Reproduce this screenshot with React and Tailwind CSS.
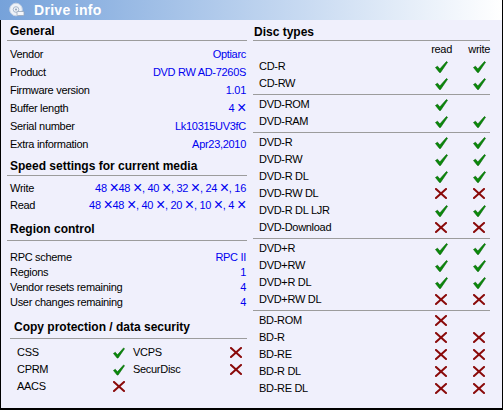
import React from 'react';

const font = { fontFamily: '"Liberation Sans", Arial, sans-serif' };

function X() {
  return <span className="text-[16px] leading-[0] relative top-[1px]">×</span>;
}

function Check() {
  return (
    <svg width="13" height="12" viewBox="0 0 13 12" className="block">
      <path d="M0.5 6.5 L2.5 5.2 L4.8 8 L11.5 0.5 L12.5 1.3 L5.5 11.5 L4.5 11.5 Z" fill="#0a8a0a" stroke="#006000" strokeWidth="0.6" strokeLinejoin="round" />
    </svg>
  );
}

function Cross() {
  return (
    <svg width="12" height="11" viewBox="0 0 12 11" className="block">
      <path d="M1 1 L11 10 M11 1 L1 10" stroke="#8a0a0a" strokeWidth="2" strokeLinecap="square" />
    </svg>
  );
}

function Heading({ children, className = '' }) {
  return (
    <div className={`h-[20px] flex items-center pl-[3px] text-[12px] font-bold tracking-normal text-black ${className}`}>{children}</div>
  );
}

function Line() {
  return <div className="h-px bg-[#9c9c9c]" />;
}

function Row({ label, value, h = 'h-[18px]' }) {
  return (
    <div className={`${h} flex items-center justify-between pl-[3px] pr-[1px]`}>
      <span>{label}</span>
      <span className="text-[#0000f0] whitespace-nowrap">{value}</span>
    </div>
  );
}

const groups = [
  [['CD-R', 1, 1], ['CD-RW', 1, 1]],
  [['DVD-ROM', 1, null], ['DVD-RAM', 1, 1]],
  [['DVD-R', 1, 1], ['DVD-RW', 1, 1], ['DVD-R DL', 1, 1], ['DVD-RW DL', 0, 0], ['DVD-R DL LJR', 1, 1], ['DVD-Download', 0, 0]],
  [['DVD+R', 1, 1], ['DVD+RW', 1, 1], ['DVD+R DL', 1, 1], ['DVD+RW DL', 0, 0]],
  [['BD-ROM', 0, null], ['BD-R', 0, 0], ['BD-RE', 0, 0], ['BD-R DL', 0, 0], ['BD-RE DL', 0, 0]],
];

function Mark({ v }) {
  if (v === null) return null;
  return v ? <Check /> : <Cross />;
}

export default function App() {
  return (
    <div className="w-[503px] h-[410px] flex flex-col bg-[#f0f0fc] text-[11px] tracking-[-0.3px] text-black overflow-hidden" style={font}>
      <div className="h-[20px] shrink-0 flex items-center bg-gradient-to-r from-[#76a2da] to-[#ffffff] border-r border-black">
        <svg width="16" height="16" viewBox="0 0 16 16" className="ml-[9px]">
          <circle cx="7" cy="7.5" r="6.3" fill="#eef2f8" stroke="#c7d3e4" strokeWidth="1" />
          <circle cx="7" cy="7.5" r="2.8" fill="none" stroke="#a9b8cc" strokeWidth="1" />
          <circle cx="7" cy="7.5" r="1" fill="#8fa1b8" />
          <rect x="8" y="9.5" width="7" height="4" rx="0.8" fill="#f4f6fa" stroke="#97a6ba" strokeWidth="0.8" />
        </svg>
        <span className="ml-[9px] text-white font-bold text-[14px] tracking-[0.3px]">Drive info</span>
      </div>
      <div className="flex-1 flex border-l border-r border-b-2 border-black">
        <div className="w-[246px] shrink-0 pl-[6px]">
          <Heading className="pt-[2px]">General</Heading>
          <Line />
          <div className="mt-[4px]">
            <Row label="Vendor" value="Optiarc" />
            <Row label="Product" value="DVD RW AD-7260S" />
            <Row label="Firmware version" value="1.01" />
            <Row label="Buffer length" value={<>4 <X /></>} />
            <Row label="Serial number" value="Lk10315UV3fC" />
            <Row label="Extra information" value="Apr23,2010" />
          </div>
          <Heading className="mt-[2px] pt-[2px]">Speed settings for current media</Heading>
          <Line />
          <div className="mt-[4px]">
            <Row h="h-[17px]" label="Write" value={<>48 <X />48 <X />, 40 <X />, 32 <X />, 24 <X />, 16</>} />
            <Row h="h-[17px]" label="Read" value={<>48 <X />48 <X />, 40 <X />, 20 <X />, 10 <X />, 4 <X /></>} />
          </div>
          <Heading className="mt-[6px] pb-[2px]">Region control</Heading>
          <Line />
          <div className="mt-[9px]">
            <Row h="h-[15px]" label="RPC scheme" value="RPC II" />
            <Row h="h-[15px]" label="Regions" value="1" />
            <Row h="h-[15px]" label="Vendor resets remaining" value="4" />
            <Row h="h-[15px]" label="User changes remaining" value="4" />
          </div>
          <div className="pl-[3px]">
            <Heading className="mt-[8px] pb-[2px] pl-[4px]">Copy protection / data security</Heading>
            <Line />
            <div className="mt-[5px] pl-[7px]">
              {[['CSS', 1, 'VCPS', 0], ['CPRM', 1, 'SecurDisc', 0], ['AACS', 0, null, null]].map(([a, av, b, bv]) => (
                <div key={a} className="h-[17px] flex items-center">
                  <span className="w-[96px]">{a}</span>
                  <span className="w-[12px] flex justify-center"><Mark v={av} /></span>
                  <span className="w-[8px]" />
                  <span className="w-[97px]">{b}</span>
                  <span className="w-[12px] flex justify-center"><Mark v={bv} /></span>
                </div>
              ))}
            </div>
          </div>
        </div>
        <div className="flex-1 pl-[6px] pr-[12px]">
          <div className="h-[20px] flex items-center pt-[4px] pl-[1px] text-[12px] font-bold tracking-normal">Disc types</div>
          <Line />
          <div className="h-[17px] flex items-center">
            <span className="flex-1" />
            <span className="w-[22px] flex justify-end whitespace-nowrap">read</span>
            <span className="w-[16px]" />
            <span className="w-[22px] flex justify-end whitespace-nowrap">write</span>
          </div>
          {groups.map((g, gi) => (
            <div key={gi}>
              {gi > 0 && (
                <div className="pt-[2px] pb-[1px]">
                  <Line />
                </div>
              )}
              {g.map(([name, r, w]) => (
                <div key={name} className="h-[17px] flex items-center">
                  <span className="flex-1 pl-[6px]">{name}</span>
                  <span className="w-[22px] flex justify-center"><Mark v={r} /></span>
                  <span className="w-[16px]" />
                  <span className="w-[22px] flex justify-center"><Mark v={w} /></span>
                </div>
              ))}
            </div>
          ))}
        </div>
      </div>
    </div>
  );
}
